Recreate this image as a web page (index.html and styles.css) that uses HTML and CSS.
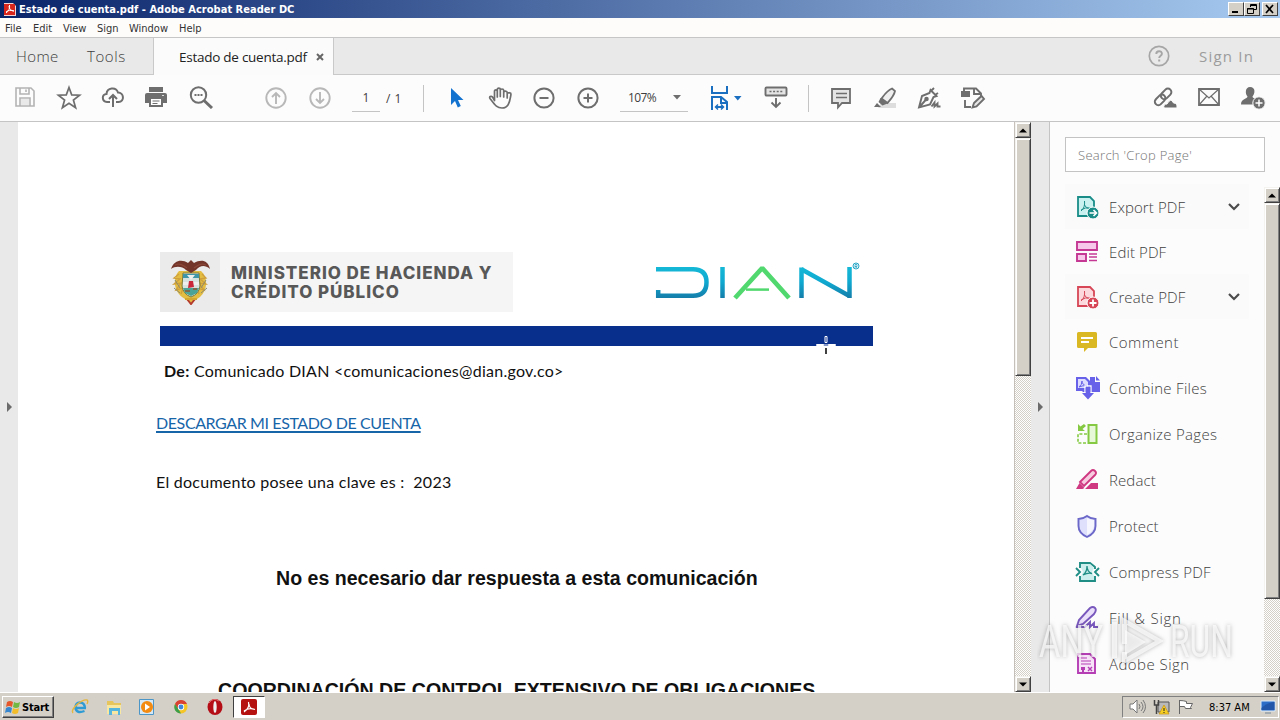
FILE: index.html
```html
<!DOCTYPE html>
<html lang="en">
<head>
<meta charset="utf-8">
<title>Estado de cuenta.pdf - Adobe Acrobat Reader DC</title>
<link rel="stylesheet" href="styles.css">
</head>
<body>
<div class="screen">
  <header class="titlebar">
    <svg class="app-icon" width="12" height="14" viewBox="0 0 12 14"><path d="M0 1h9l3 3v10H0z" fill="#f4d4d4"/><rect y="2" width="11" height="11" fill="#d8261c"/><path d="M2 11c3-2 4-5 3.500-8M5 4c0 3 2 5 5 5M2 10c2-2 5-2 8-1" fill="none" stroke="#fff"/></svg>
    <span class="title-text">Estado de cuenta.pdf - Adobe Acrobat Reader DC</span>
    <div class="win-buttons">
      <span class="wbtn"><svg width="12" height="10"><path d="M2 8h6" stroke="#000" stroke-width="2"/></svg></span>
      <span class="wbtn"><svg width="12" height="10" fill="none" stroke="#000"><path d="M4.500 3V.5h6v5H8M4 1.500h7M1.500 4.500h6v5h-6zM1 5h7"/></svg></span>
      <span class="wbtn close"><svg width="12" height="10"><path d="M2 1l7 8M9 1L2 9" stroke="#000" stroke-width="1.700"/></svg></span>
    </div>
  </header>
  <nav class="menubar"><span class="m1">File</span><span class="m2">Edit</span><span class="m3">View</span><span class="m4">Sign</span><span class="m5">Window</span><span class="m6">Help</span></nav>
  <div class="tabs">
    <div class="home-tabs"><span class="home">Home</span><span class="tools">Tools</span></div>
    <div class="doc-tab"><span>Estado de cuenta.pdf</span><svg width="8" height="8"><path d="M1 1l6 6M7 1L1 7" stroke="#666" stroke-width="2"/></svg></div>
    <div class="tabs-right">
      <svg width="22" height="22" fill="none" stroke="#a6a6a6"><circle cx="11" cy="11" r="9.700" stroke-width="1.700"/><path d="M8.300 9c0-3.600 5.600-3.600 5.600-.3 0 2-2.700 2-2.700 4.300" stroke-width="1.900"/><path d="M11.200 14.500v2" stroke-width="2"/></svg>
      <span>Sign In</span>
    </div>
  </div>
  <div class="toolbar">
    <div class="tools-file">
      <span class="cell"><svg width="24" height="24" fill="none" stroke="#b3b3b3" stroke-width="1.600"><path d="M3 3h15l3 3v15H3zM7 3v6h9V3M13 4.500V7M7 21v-8h10v8"/><path d="M8 14h8v6H8z" fill="#e9e9e9" stroke="none"/></svg></span>
      <span class="cell"><svg width="26" height="26" fill="none" stroke="#6e6e6e" stroke-width="1.700"><path d="M13 2.500l2.700 7.400 7.900.3-6.200 4.900 2.200 7.600-6.600-4.400-6.600 4.400 2.200-7.600-6.200-4.900 7.900-.3z"/></svg></span>
      <span class="cell"><svg width="24" height="24" fill="none" stroke="#6e6e6e" stroke-width="2"><path d="M9 17H6c-5.500-.5-5.500-8-.5-8C6 2.500 15 1.500 17 7.500c6 0 7 9 .5 9.500H15M12 22V10M8 14l4-4 4 4"/></svg></span>
      <span class="cell print"><svg width="24" height="24"><path d="M5 2h14v5H5z" fill="#6e6e6e"/><path d="M3 8h18q2 0 2 2v8h-4v4H5v-4H1v-8q0-2 2-2z" fill="#6e6e6e"/><path d="M7 14h10v6H7z" fill="#fff"/><path d="M8.500 16h7M8.500 18.500h5" stroke="#6e6e6e"/><path d="M18 10.500h2" stroke="#ddd"/></svg></span>
      <span class="cell"><svg width="24" height="24" fill="none" stroke="#6e6e6e"><circle cx="9.500" cy="10" r="7.700" stroke-width="2"/><path d="M15 15.500l8 7.500" stroke-width="3"/><path d="M5.500 10h8" stroke-width="2" stroke-dasharray="2 1"/></svg></span>
    </div>
    <div class="tools-page">
      <span class="cell"><svg width="24" height="24" fill="none" stroke="#b8b8b8" stroke-width="1.900"><circle cx="12" cy="12" r="9.700"/><path d="M12 18V7M8 11l4-4 4 4"/></svg></span>
      <span class="cell"><svg width="24" height="24" fill="none" stroke="#b8b8b8" stroke-width="1.900"><circle cx="12" cy="12" r="9.700"/><path d="M12 6v11M8 13l4 4 4-4"/></svg></span>
    </div>
    <div class="page-field">1</div><div class="page-total">/ 1</div>
    <i class="sep s1"></i>
    <div class="tools-view">
      <span class="cell"><svg width="24" height="24"><path d="M7 2v17l4-4 2.800 6.500 3-1.400-2.800-6.100H19.500z" fill="#1473cf"/></svg></span>
      <span class="cell"><svg width="24" height="24" fill="none" stroke="#6e6e6e" stroke-width="1.700" stroke-linecap="round" stroke-linejoin="round"><path d="M6.500 14.500V5.200c0-1.800 2.800-1.800 2.800 0V11M9.300 10V3.500c0-1.800 3-1.800 3 0V10.500M12.300 4.500c0-2 3.400-2 3.400 0v6.500M15.700 6.500c0-1.900 3.500-1.700 3.500.1L22 6.800c1.300 0 1 2 .5 4.200-1 6-2.500 11-8.500 11-5 0-6.500-2.300-12-9.500-1.200-1.700 1-3 2.400-1.600l2.100 3.600M19.200 6.600V12"/></svg></span>
      <span class="cell"><svg width="24" height="24" fill="none" stroke="#6e6e6e" stroke-width="2"><circle cx="12" cy="12" r="9.600"/><path d="M7.500 12h9"/></svg></span>
      <span class="cell"><svg width="24" height="24" fill="none" stroke="#6e6e6e" stroke-width="2"><circle cx="12" cy="12" r="9.600"/><path d="M7.500 12h9M12 7.500v9"/></svg></span>
    </div>
    <div class="zoom-field"><span>107%</span><svg width="8" height="5"><path d="M0 0h8L4 4.500z" fill="#6e6e6e"/></svg></div>
    <div class="tools-fit">
      <span class="cell"><svg width="34" height="26" fill="none" stroke="#1b6fc0" stroke-width="2"><path d="M4 1v7h15V1M4 25V12h9l6 5v8M13 12v6h6M8 22h7" /><path d="M10 19.500L7.500 22l2.500 2.500M13 19.500l2.500 2.500-2.500 2.500" stroke-width="1.500"/><path d="M26 11h7.500l-3.700 4.500z" fill="#1b6fc0" stroke="none"/></svg></span>
      <span class="cell last"><svg width="24" height="24" fill="none" stroke="#6e6e6e" stroke-width="1.900"><rect x="1.500" y="2.500" width="21" height="8" rx="1" fill="#e4e4e4"/><path d="M5.500 6.500h13" stroke-width="1.700" stroke-dasharray="2 1.600"/><path d="M12 13v9M7.500 17.500l4.500 4.500 4.500-4.500"/></svg></span>
    </div>
    <i class="sep s2"></i>
    <div class="tools-note">
      <span class="cell"><svg width="24" height="24" fill="#e4e4e4" stroke="#6e6e6e" stroke-width="1.800"><path d="M3 3h18v14h-8l-4 4.500V17H3z"/><path d="M7 7.500h11M7 11.500h11" stroke-width="1.300"/></svg></span>
      <span class="cell"><svg width="24" height="24" fill="none" stroke="#6e6e6e" stroke-width="1.800"><path d="M8 17h15v5H5z" fill="#ddd" stroke="none"/><path d="M19 2.500l3 2.500c-1 5-4 8-7.500 12l-6-4.500c3-4 5.500-8 10.500-10z" fill="#eee"/><path d="M7.500 12l7 5.500-5 2-4-3.500zM4 17l4 4H1z" fill="#6e6e6e" stroke="none"/></svg></span>
      <span class="cell"><svg width="24" height="24" fill="none" stroke="#6e6e6e" stroke-width="1.900"><path d="M13.500 4l6 6-3 1-3.500 7.500L2 21.500 5 10l7.500-3zM2.500 21l7-8M14 5l3-3M18 9l3-2"/><circle cx="9.500" cy="13" r="1.300" fill="#6e6e6e"/><path d="M14.500 20.500l3-4v4l3-3v3h3"/></svg></span>
      <span class="cell"><svg width="26" height="24" fill="none" stroke="#6e6e6e" stroke-width="1.900"><path d="M4 5V2.500h12l5 5v3M14 3v5h6M5 14v7h6"/><path d="M1 5h9v6H1z" fill="#6e6e6e" stroke="none"/><path d="M14 17l7.500-7 2.500 3-7.500 7.500-4 1z" fill="#e7e7e7"/></svg></span>
    </div>
    <div class="tools-share">
      <span class="cell"><svg width="26" height="24" fill="none" stroke="#6e6e6e" stroke-width="2"><g transform="rotate(-45 12 11)"><rect x="0.500" y="7.500" width="12" height="7" rx="3.500"/><rect x="9" y="7.500" width="12" height="7" rx="3.500"/></g><path d="M12 23q-1-4 3-4 4-7 6.500-1 4 0 3.500 5z" fill="#6e6e6e" stroke="#fcfcfc" stroke-width="1"/></svg></span>
      <span class="cell"><svg width="24" height="24" fill="none" stroke="#6e6e6e" stroke-width="1.800"><path d="M2 4h20v16H2z"/><path d="M2 4l10 9 10-9M2 20l8-9M22 20l-8-9" stroke-width="1.200"/></svg></span>
      <span class="cell"><svg width="26" height="26"><path d="M10 2c6 0 5 7 2.500 9.500 0 2 4.500 2.500 5.500 5l-4 3H1c0-6 6.500-5.500 6.500-8C5 9 5 2 10 2z" fill="#6e6e6e"/><circle cx="19" cy="18" r="6.200" fill="#6e6e6e" stroke="#fcfcfc"/><path d="M15.500 18h7M19 14.500v7" stroke="#fff" stroke-width="1.500"/></svg></span>
    </div>
  </div>
  <main class="work">
    <div class="strip"><svg width="7" height="12"><path d="M1 1v10l5-5z" fill="#6b6b6b"/></svg></div>
    <article class="page">
      <div class="doc-head">
        <div class="ministry">
          <div class="crest"><svg width="40" height="46" viewBox="0 0 40 46">
            <path d="M9 12C4 17 2 30 12 38l9 6 9-6c8-7 8-20 1-26" fill="#e3bd42"/>
            <path d="M9 15l-5 4 6 1-6 5 7-1-5 7 7-2-2 6M32 15l4 4-6 1 6 5-7-1 5 7-7-2 2 6" fill="none" stroke="#cf9f3c" stroke-width="1.300"/>
            <path d="M5 21l5 8M4 29l6 5M36 21l-5 8M37 29l-6 5" stroke="#8d8a6e"/>
            <path d="M13 14h16l1 13q-1 8-9 11-8-3-9-11z" fill="#d5e2e0" stroke="#7b7a3a"/>
            <path d="M13 15h16v4H13z" fill="#3f96a8"/><path d="M13 29h16l-2 5-6 3-6-3z" fill="#4ba397"/>
            <path d="M13 23h16v3H13zM17 16l4 5 4-5" fill="#eee"/>
            <path d="M19 22h4l1 6-6 1z" fill="#c9283a"/><path d="M15 32h5M23 30h4" stroke="#8d5a35" stroke-width="1.500"/>
            <path d="M1 10C4 1 12 0 18 4l3-3 3 3c7-4 14-3 16 6-6-5-10-3-14 1l-5 3-5-3C12 7 5 7 1 10z" fill="#73342a"/>
            <path d="M5 6c5-2 8 0 12 3M36 6c-5-2-8 0-12 3" fill="none" stroke="#8a4636" stroke-width="1.300"/>
            <path d="M17 40l4 5 4-5" fill="none" stroke="#b43c2c" stroke-width="2"/><path d="M15 40h12" stroke="#d3a62f" stroke-width="2"/>
          </svg></div>
          <div class="ministry-name">MINISTERIO DE HACIENDA Y<br>CRÉDITO PÚBLICO</div>
        </div>
        <svg class="dian" width="206" height="40" viewBox="0 0 206 40" role="img" aria-label="DIAN">
          <defs><linearGradient id="sea" x1="0" y1="4" x2="0" y2="36" gradientUnits="userSpaceOnUse"><stop offset="0" stop-color="#15b9d6"/><stop offset=".5" stop-color="#10a9d1"/><stop offset="1" stop-color="#147da9"/></linearGradient></defs>
          <g fill="none" stroke="url(#sea)" stroke-width="4.500"><path d="M1 7.200h37c10 0 13.500 5 13.500 13s-3.500 13.500-13.500 13.500H3.200V28"/><path d="M67.500 5l.01 31"/><path d="M146.500 36V5.500M146 7l48.500 27M194.500 36V5"/></g>
          <path d="M80 36l27.200-30L134 36" fill="none" stroke="#51d86e" stroke-width="4.700" stroke-linejoin="bevel"/><path d="M91 27.600h23" stroke="#51d86e" stroke-width="2.500"/>
          <circle cx="201" cy="4" r="3" fill="none" stroke="#28a6c6"/><path d="M200 6V2.500h2v2h-2M201 4.500l1 1.500" fill="none" stroke="#28a6c6" stroke-width=".8"/>
        </svg>
      </div>
      <div class="band"></div>
      <p class="from"><b>De:</b> <span>Comunicado DIAN &lt;comunicaciones@dian.gov.co&gt;</span></p>
      <p class="download"><a>DESCARGAR MI ESTADO DE CUENTA</a></p>
      <p class="key">El documento posee una clave es : &nbsp;2023</p>
      <p class="notice">No es necesario dar respuesta a esta comunicación</p>
      <p class="office">COORDINACIÓN DE CONTROL EXTENSIVO DE OBLIGACIONES</p>
    </article>
    <div class="scrollbar">
      <span class="sbtn"><svg width="8" height="5"><path d="M0 4.500L4 .5l4 4z"/></svg></span><span class="thumb doc-thumb"></span><span class="track"></span><span class="sbtn"><svg width="8" height="5"><path d="M0 .5h8l-4 4z"/></svg></span>
    </div>
    <div class="strip"><svg width="7" height="12"><path d="M1 1v10l5-5z" fill="#6b6b6b"/></svg></div>
    <aside class="panel">
      <div class="search">Search 'Crop Page'</div>
      <div class="panel-body">
        <div class="tool-list">
          <div class="tool shade"><svg class="ico" width="26" height="26"><path d="M3 2h12l4 4v15H3z" fill="#c8f1f0" stroke="#198c88" stroke-width="1.800"/><path d="M6 16c3-2 4-6 3.500-10M9.500 10q1 3 6 4M6 15q4-3 9-2" fill="none" stroke="#198c88"/><circle cx="18" cy="18" r="6" fill="#198c88" stroke="#fff"/><path d="M14.500 18H21M18.500 15l3 3-3 3" fill="none" stroke="#fff" stroke-width="1.600"/></svg><span class="pdf">Export PDF</span><svg class="chev" width="14" height="10"><path d="M2 2l5 5 5-5" fill="none" stroke="#4b4b4b" stroke-width="2.200"/></svg></div>
          <div class="tool"><svg width="26" height="26" fill="#f7c8ea" stroke="#c53894" stroke-width="1.900"><path d="M2 3h20v8H2zM2 15h9v7H2z"/><path d="M14 15h8M14 18h8M14 21.500h8" stroke-width="1.300"/></svg><span class="pdf">Edit PDF</span></div>
          <div class="tool shade"><svg class="ico" width="26" height="26"><path d="M3 2h12l4 4v15H3z" fill="#fbd9dc" stroke="#d64656" stroke-width="1.800"/><path d="M6 16c3-2 4-6 3.500-10M9.500 10q1 3 6 4M6 15q4-3 9-2" fill="none" stroke="#d64656"/><circle cx="18" cy="18" r="6" fill="#d64656" stroke="#fff"/><path d="M14.500 18h7M18 14.500v7" stroke="#fff" stroke-width="1.800"/></svg><span class="pdf">Create PDF</span><svg class="chev" width="14" height="10"><path d="M2 2l5 5 5-5" fill="none" stroke="#4b4b4b" stroke-width="2.200"/></svg></div>
          <div class="tool tall"><svg class="ico" width="26" height="26"><path d="M3.500 2h17q1.500 0 1.500 1.500v13q0 1.500-1.500 1.500H13l-4 4v-4H3.500Q2 18 2 16.500v-13Q2 2 3.500 2z" fill="#d9b824"/><path d="M6 8h12M6 12h8" stroke="#fff" stroke-width="1.800"/></svg><span class="wide">Comment</span></div>
          <div class="tool tall"><svg width="26" height="26"><path d="M1 2h10l4 4v2h3v9H8l-1-1H1z" fill="#6661e8"/><path d="M3 4h7l3 3v6H3z" fill="#dddcff"/><path d="M4 12q3-2 3-6 0 4 5 5-4-1-8 1" fill="none" stroke="#6661e8"/><path d="M15 2h5v5h5v10h-7V9h-3z" fill="#6661e8"/><path d="M21 1l4 4.500h-4z" fill="#6661e8"/><path d="M10 18v-7h6v7" fill="none" stroke="#fff" stroke-width="1.300"/><path d="M10.700 11.700h4.600V18H19l-6 6.500L7 18h3.700z" fill="#6661e8"/></svg><span>Combine Files</span></div>
          <div class="tool tall"><svg class="ico" width="26" height="26" fill="none" stroke="#84c941" stroke-width="2"><path d="M13.500 3h8v18h-8z" fill="#e6f8d8"/><path d="M12 12H3v9h9" stroke-width="1.600" stroke-dasharray="3 1.600"/><path d="M3 2l2.500 2.500L9 2l2 2-3.500 3L10 9H3z" fill="#84c941" stroke="none"/></svg><span>Organize Pages</span></div>
          <div class="tool tall"><svg width="26" height="26"><path d="M1 22l3.500-6 5 5-2 1zM10 22l6-6h7v6z" fill="#cf3982"/><path d="M5 15L16 4q2-2 4 0t0 4L9 19z" fill="#f7cce0" stroke="#cf3982" stroke-width="1.900"/></svg><span class="pdf">Redact</span></div>
          <div class="tool tall"><svg class="ico" width="26" height="26"><path d="M12 2q4 3 8.500 3v7q0 7-8.500 11-8.500-4-8.500-11V5Q8 5 12 2z" fill="#dfe0fb" stroke="#6b68c9" stroke-width="1.900"/><path d="M12 4v17q6-3 7-9V6Q15 6 12 4z" fill="#f6f6ff"/></svg><span class="pdf">Protect</span></div>
          <div class="tool tall"><svg class="ico" width="26" height="26" fill="none" stroke="#218e86" stroke-width="1.900"><path d="M5 8V3h10l5 4v2M5 16v5h15v-5"/><path d="M6 4h9l4 4-2 4 2 4v4H6v-4l2-4-2-4z" fill="#ccefed" stroke="none"/><path d="M1 8l4 4-4 4M24 8l-4 4 4 4"/><path d="M8 15q4-3 4-9 0 6 5 7.500-4-1-9 1.500" stroke-width="1.300"/></svg><span class="comp">Compress PDF</span></div>
          <div class="tool tall"><svg width="26" height="26" fill="none" stroke="#7958bd" stroke-width="1.900"><path d="M2 21l2-6L15 3q3-2 5 0t-1 6L8 19z" fill="#eadffa"/><path d="M1 22h9l5-5v5l4-4v4h4"/></svg><span class="fill">Fill &amp; Sign</span></div>
          <div class="tool tall"><svg width="26" height="26"><path d="M3 3h12l5 5v14H3z" fill="#f8e4f8" stroke="#b53eb5" stroke-width="1.900"/><path d="M6 7h6M6 10h10M6 13h10" stroke="#b53eb5"/><path d="M6 16h4v3H9v2H7v-2H6z" fill="#b53eb5"/><path d="M13 16l4 4M17 16l-4 4" stroke="#b53eb5" stroke-width="1.400"/></svg><span class="wide">Adobe Sign</span></div>
        </div>
        <div class="scrollbar side">
          <span class="sbtn"><svg width="8" height="5"><path d="M0 4.500L4 .5l4 4z"/></svg></span><span class="thumb side-thumb"></span><span class="track"></span><span class="sbtn"><svg width="8" height="5"><path d="M0 .5h8l-4 4z"/></svg></span>
        </div>
      </div>
    </aside>
  </main>
  <footer class="taskbar">
    <div class="start"><svg width="16" height="16"><path d="M2 3q3-2 6 0L7 8Q4 6 1 8z" fill="#e6572c"/><path d="M9 3q3 2 6 0l-1 5q-3 2-6 0z" fill="#72b842"/><path d="M1 9q3-2 6 0l-1 5q-3-2-6 0z" fill="#3787d0"/><path d="M8 9q3 2 6 0l-1 5q-3 2-6 0z" fill="#f3bd29"/></svg><span>Start</span></div>
    <div class="quick">
      <span class="q"><svg width="18" height="18" fill="none"><path d="M15 10H4.500q0-5.500 4.500-5.500T14 10M4.500 10q1 6 9 3" stroke="#2f9bd4" stroke-width="2.400"/><path d="M2 15C-1 11 11 1 16 2c1 0 1 2 0 4" stroke="#e5b63e" stroke-width="1.400"/></svg></span>
      <span class="q"><svg width="18" height="18"><path d="M2 3h6l1 2h7v11H2z" fill="#e6c65c"/><path d="M2 7h14v9H2z" fill="#f7e7a0"/><path d="M4 10h11v7h-2v-4H7v4H4z" fill="#55b5dc"/></svg></span>
      <span class="q"><svg width="18" height="18"><path d="M1.500 1.500h14v15h-14z" fill="#d4e9f5" stroke="#4b96c6"/><circle cx="9" cy="9" r="6" fill="#f38a12"/><path d="M7 5.500v7l5-3.500z" fill="#fff"/></svg></span>
      <span class="q"><svg width="18" height="18"><circle cx="9" cy="9" r="6.500" fill="#f5c525"/><path d="M3 6a6.500 6.500 0 0112 0H9L6 11z" fill="#d94132"/><path d="M3 6l4 6 2 3.500A6.500 6.500 0 013 6z" fill="#3c9e4b"/><circle cx="9" cy="9" r="3.200" fill="#fff"/><circle cx="9" cy="9" r="2.400" fill="#4087dc"/></svg></span>
      <span class="q"><svg width="18" height="18"><ellipse cx="9" cy="9" rx="7.500" ry="8" fill="#b50d16"/><ellipse cx="9" cy="9" rx="1.700" ry="6" fill="#eee"/><path d="M3 5Q7-1 13 3" stroke="#e56c6c" fill="none"/></svg></span>
      <span class="q running"><svg width="16" height="16"><rect width="16" height="16" rx="2" fill="#b5110e"/><path d="M3 13q6-4 4.500-10M8 5q0 5 6 5.500M3 12q5-4 11-1.500" fill="none" stroke="#fff" stroke-width="1.200"/></svg></span>
    </div>
    <div class="tray">
      <svg width="18" height="16" fill="none" stroke="#777"><path d="M2 5h3l4-4v13l-4-4H2z" fill="#fff"/><path d="M11 5q2 3 0 5M13 3q4 5 0 9M15 1q5 7 0 13"/></svg>
      <svg class="net" width="17" height="16"><path d="M5 3h11v10H5z" fill="#b9b9b9" stroke="#555"/><path d="M1.500 1v5h4V1M3.500 6v9" fill="none" stroke="#444" stroke-width="1.500"/><path d="M11 6l5 9H6z" fill="#f7cf22" stroke="#c89212" stroke-width=".7"/><path d="M11 9v3M11 13v1" stroke="#222"/></svg>
      <svg class="flag" width="17" height="16" fill="#fff" stroke="#666"><path d="M2.500 1v14M2.500 1.500q4 0 7 1v2h6l-2 4 1 1h-6l-1-2h-5"/></svg>
      <span>8:37 AM</span>
      <svg class="desk" width="16" height="14"><path d="M1 1h14v10H1z" fill="#2c6ec7" stroke="#dce9f5"/><path d="M1.500 8Q6 3 14.500 2v8h-13z" fill="#2156a8"/><path d="M5 13h6" stroke="#789"/></svg>
    </div>
  </footer>
  <svg class="cursor" width="20" height="20"><path d="M9 1.500h2v6H9zM.5 9.500h7v1h-7zM12.500 9.500h7v1h-7z" fill="#092f8c" stroke="#fff"/><path d="M10 13v6" stroke="#000" stroke-width="1.500"/><path d="M7 10h6" stroke="#fff"/></svg>
  <svg class="watermark" width="200" height="64" viewBox="0 0 200 64">
    <g class="wm-shape"><text x="2" y="49" textLength="64" lengthAdjust="spacingAndGlyphs">ANY</text><text x="133" y="49" textLength="63" lengthAdjust="spacingAndGlyphs">RUN</text><path d="M75 14h5v36h-5zM85 9l42 24-42 24V44h5v5l28-16-28-16v19h-5z"/><path d="M88 22l21 12-21 13z"/></g>
  </svg>
</div>
</body>
</html>
```
FILE: styles.css
```css
* { box-sizing: border-box; }
body { margin: 0; background: #fff; }
svg { display: block; flex: none; }
p { margin: 0; }
.screen { position: relative; width: 1280px; height: 720px; overflow: hidden; display: flex; flex-direction: column; font-family: "Open Sans", "Noto Sans", sans-serif; color: #3e3e3e; white-space: nowrap; }

.titlebar { height: 18px; flex: none; display: flex; align-items: center; padding: 0 2px 0 4px; background: linear-gradient(90deg, #0a246a, #a6caf0); color: #fff; }
.title-text { margin-left: 3px; padding-top: 1px; font: bold 11px/17px "DejaVu Sans Condensed", sans-serif; letter-spacing: 0.02px; }
.win-buttons { display: flex; margin-left: auto; height: 14px; }
.wbtn { width: 16px; height: 14px; display: flex; justify-content: center; align-items: center; background: #d4d0c8; border: 1px solid; border-color: #fff #404040 #404040 #fff; }
.wbtn.close { margin-left: 2px; }
.menubar { height: 20px; flex: none; display: flex; padding-left: 5px; background: #fdfcfb; border-bottom: 1px solid #c6c6c6; color: #333; font: 11px/21px "DejaVu Sans Condensed", sans-serif; }
.m1 { width: 28px; } .m2 { width: 30px; } .m3 { width: 34px; } .m4 { width: 32px; } .m5 { width: 50px; }

.tabs { height: 37px; flex: none; display: flex; background: #e9e9e9; font-size: 15px; }
.home-tabs { width: 154px; display: flex; align-items: center; border: solid #c9c9c9; border-width: 0 1px 1px 0; font-weight: 300; }
.home { margin-left: 16px; width: 71px; letter-spacing: 0.4px; }
.tools { letter-spacing: 0.6px; }
.doc-tab { width: 180px; display: flex; align-items: center; padding-left: 25px; background: #fbfbfb; border-right: 1px solid #c9c9c9; color: #222; font-size: 13.5px; }
.doc-tab span { width: 137px; letter-spacing: -0.26px; }
.tabs-right { flex: 1; display: flex; align-items: center; justify-content: flex-end; padding-right: 26px; border-bottom: 1px solid #c9c9c9; color: #9c9c9c; }
.tabs-right span { width: 55px; margin-left: 29px; letter-spacing: 1.2px; }

.toolbar { height: 47px; flex: none; display: flex; align-items: center; padding-left: 3px; background: #fcfcfc; border-bottom: 1px solid #c4c4c4; }
.toolbar > div { display: flex; }
.cell { width: 44px; display: flex; justify-content: center; }
.print { padding-right: 2px; }
.tools-page { margin-left: 31px; }
.page-field, .page-total, .zoom-field { height: 27px; align-items: center; font-size: 12px; }
.page-field { width: 28px; margin-left: 10px; justify-content: center; border-bottom: 1px solid #c4c4c4; }
.page-total { width: 20px; margin-left: 6px; white-space: pre; word-spacing: 1px; }
.sep { width: 1px; height: 27px; background: #c4c4c4; }
.s1 { margin-left: 17px; margin-right: 10px; }
.zoom-field { width: 68px; margin-left: 10px; padding: 0 7px 0 8px; justify-content: space-between; border-bottom: 1px solid #c4c4c4; }
.zoom-field span { letter-spacing: -0.6px; }
.tools-fit { margin-left: 9px; }
.tools-fit .cell svg { margin-left: 12px; }
.tools-fit .last { margin-left: 13px; }
.tools-fit .last svg { margin-left: 0; }
.s2 { margin: 0 10px; }
.tools-share { margin-left: auto; margin-right: 5px; }

.work { height: 570px; flex: none; display: flex; overflow: hidden; }
.strip { width: 18px; display: flex; align-items: center; justify-content: center; padding-bottom: 1px; background: #e9e9e9; }
.page { width: 996px; overflow: hidden; background: #fff; color: #111; }
.doc-head { display: flex; margin: 130px 0 0 142px; height: 60px; }
.ministry { width: 353px; display: flex; background: #f5f5f5; }
.crest { width: 60px; display: flex; align-items: center; justify-content: center; background: #ebebeb; }
.ministry-name { margin: 12px 0 0 11px; color: #585858; font: 800 17px/18.5px Inter, Roboto, sans-serif; letter-spacing: 0.97px; }
.dian { margin: 10px 0 0 142px; }
.band { width: 713px; height: 20px; margin: 14px 0 0 142px; background: #092f8c; }
.from, .download, .key { font: 16px/24px Lato, sans-serif; letter-spacing: 0.26px; }
.from { margin: 13px 0 0 146px; }
.download { margin: 28px 0 0 138px; }
.download a { color: #1765a9; text-decoration: underline; text-decoration-thickness: 1.5px; text-underline-offset: 2px; letter-spacing: -0.4px; }
.key { margin: 35px 0 0 138px; }
.notice { margin: 69px 0 0 258px; font: bold 19.57px/30px "Liberation Sans", sans-serif; }
.office { margin: 82px 0 0 200px; font: bold 19.6px/30px "Liberation Sans", sans-serif; }

.scrollbar { width: 17px; display: flex; flex-direction: column; background: repeating-conic-gradient(#d4d0c8 0% 25%, #fff 0% 50%) 0 0 / 2px 2px; border-left: 1px solid #c5c1ba; }
.sbtn { height: 16px; flex: none; display: flex; align-items: center; justify-content: center; }
.sbtn, .thumb { background: #d4d0c8; border: 1px solid; border-color: #f5f3ef #404040 #404040 #f5f3ef; box-shadow: inset 1px 1px #fff, inset -1px -1px #808080; }
.thumb { flex: none; }
.doc-thumb { height: 238px; }
.side-thumb { height: 396px; }
.track { flex: 1; }
.panel { width: 231px; display: flex; flex-direction: column; background: #fcfcfc; border-left: 1px solid #c4c4c4; }
.search { flex: none; width: 200px; height: 35px; margin: 15px 0 12px 15px; padding-left: 12px; border: 1px solid #c3c3c3; background: #fff; color: #747474; font-size: 13px; line-height: 34px; font-weight: 300; letter-spacing: 0.3px; }
.panel-body { flex: 1; min-height: 0; display: flex; }
.tool-list { width: 214px; padding-left: 15px; overflow: hidden; }
.tool { width: 184px; height: 45px; flex: none; padding-left: 10px; display: flex; align-items: center; font-size: 15px; font-weight: 300; letter-spacing: 0.3px; }
.tool.shade { background: #fafafa; }
.tool.tall { height: 46px; }
.tool .ico { margin-top: 2px; }
.tool span { margin-left: 8px; }
.tool .pdf { letter-spacing: 0.1px; }
.tool .comp { letter-spacing: 0.22px; }
.tool .wide { letter-spacing: 0.45px; }
.tool .fill { letter-spacing: 0.75px; }
.tool .chev { margin-left: auto; margin-right: 8px; }
.side { width: 16px; margin-top: 3px; border-left: 0; }

.taskbar { height: 28px; flex: none; display: flex; align-items: center; padding-top: 1px; background: #d4d0c8; border-top: 1px solid #fff; color: #000; }
.start { width: 52px; height: 22px; margin-left: 2px; padding-left: 2px; display: flex; align-items: center; border: 1px solid; border-color: #fff #404040 #404040 #fff; box-shadow: inset -1px -1px #808080; font: bold 11px "DejaVu Sans Condensed", sans-serif; }
.start span { margin-left: 1px; letter-spacing: -0.2px; }
.quick { display: flex; margin-left: 9px; }
.q { width: 33.8px; height: 22px; display: flex; align-items: center; justify-content: center; }
.q.running { width: 32px; margin-left: 1px; background: #fff; border: 1px solid; border-color: #404040 #fff #fff #404040; }
.tray { width: 157px; height: 22px; margin-left: auto; margin-right: 1px; padding-left: 5px; display: flex; align-items: center; border: 1px solid; border-color: #808080 #fff #fff #808080; font: 11px "DejaVu Sans Condensed", sans-serif; }
.net { margin-left: 7px; } .flag { margin-left: 7px; } .tray span { width: 42px; margin-left: 15px; } .desk { margin-left: 9px; }
.cursor { position: absolute; left: 816px; top: 335px; }
.watermark { position: absolute; left: 1037px; top: 608px; }
.wm-shape { fill: #fff; fill-opacity: 0.7; font: 44px Roboto, sans-serif; filter: drop-shadow(0 0 2px rgba(60, 60, 60, 0.5)); }
```
